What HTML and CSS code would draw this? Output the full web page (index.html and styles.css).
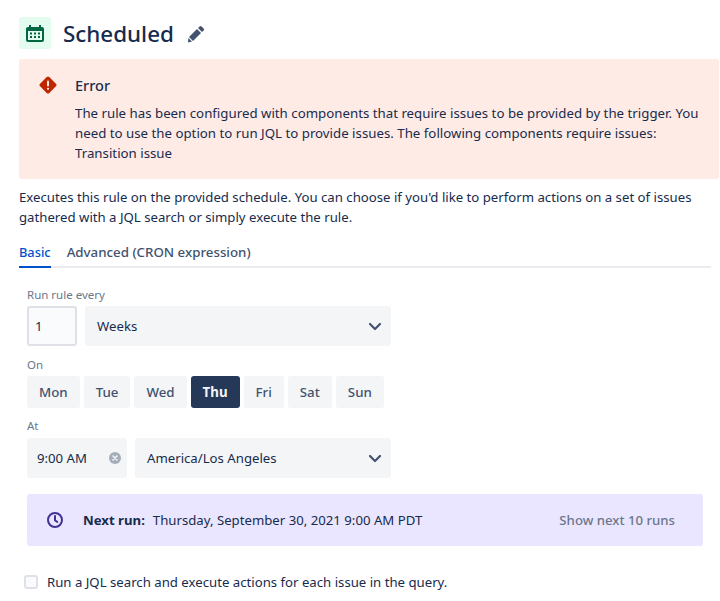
FILE: index.html
```html
<!DOCTYPE html>
<html lang="en">
<head>
  <meta charset="UTF-8" />
  <title>Scheduled</title>
  <link rel="stylesheet" href="styles.css">
</head>
<body>
  <div class="title-row">
    <span class="trigger-icon">
      <svg width="20" height="20" viewBox="0 0 20 20">
        <path fill="#006644" d="M4 2h2v2h8V2h2v2h1a2 2 0 0 1 2 2v11a2 2 0 0 1-2 2H3a2 2 0 0 1-2-2V6a2 2 0 0 1 2-2h1zM3 8v9h14V8z"/>
        <path fill="#006644" d="M5 9.5h2v2H5zM9 9.5h2v2H9zM13 9.5h2v2h-2zM5 13h2v2H5zM9 13h2v2H9zM13 13h2v2h-2z"/>
      </svg>
    </span>
    <h1>Scheduled</h1>
    <svg class="edit-icon" width="18" height="18" viewBox="0 0 18 18">
      <path fill="#42526e" d="M12.6 1.4a1.4 1.4 0 0 1 2 0l2 2a1.4 1.4 0 0 1 0 2L15 7l-4-4zM10 4l4 4-8 8-4-4zM1.400 13l3.600 3.600-4 1z"/>
    </svg>
  </div>

  <div class="error-box">
    <svg class="error-icon" width="18" height="18" viewBox="0 0 18 18">
      <path fill="#bf2600" d="M7.700 1.100a1.800 1.800 0 0 1 2.600 0l6.600 6.600a1.800 1.800 0 0 1 0 2.600l-6.600 6.600a1.800 1.800 0 0 1-2.600 0L1.100 10.300a1.800 1.800 0 0 1 0-2.600z"/>
      <rect x="8" y="4.500" width="2" height="6" rx="1" fill="#ffebe6"/>
      <circle cx="9" cy="12.800" r="1.100" fill="#ffebe6"/>
    </svg>
    <div>
      <h2>Error</h2>
      <p>The rule has been configured with components that require issues to be provided by the trigger. You need to use the option to run JQL to provide issues. The following components require issues: Transition issue</p>
    </div>
  </div>

  <p class="intro">Executes this rule on the provided schedule. You can choose if you'd like to perform actions on a set of issues gathered with a JQL search or simply execute the rule.</p>

  <div class="tabs">
    <span class="tab active">Basic</span>
    <span class="tab">Advanced (CRON expression)</span>
  </div>

  <div class="form">
    <div class="field-label first">Run rule every</div>
    <div class="row">
      <div class="number-input">1</div>
      <div class="select">
        <span>Weeks</span>
        <svg width="14" height="9" viewBox="0 0 14 9"><path d="M2 2l5 5 5-5" fill="none" stroke="#42526e" stroke-width="2.200" stroke-linecap="round" stroke-linejoin="round"/></svg>
      </div>
    </div>

    <div class="field-label">On</div>
    <div class="days">
      <span class="day">Mon</span>
      <span class="day">Tue</span>
      <span class="day">Wed</span>
      <span class="day selected">Thu</span>
      <span class="day">Fri</span>
      <span class="day">Sat</span>
      <span class="day">Sun</span>
    </div>

    <div class="field-label at">At</div>
    <div class="row">
      <div class="time-input">
        <span>9:00 AM</span>
        <svg width="12" height="12" viewBox="0 0 12 12">
          <circle cx="6" cy="6" r="6" fill="#a5adba"/>
          <path d="M4 4l4 4M8 4l-4 4" stroke="#f4f5f7" stroke-width="1.600" stroke-linecap="round"/>
        </svg>
      </div>
      <div class="select">
        <span>America/Los Angeles</span>
        <svg width="14" height="9" viewBox="0 0 14 9"><path d="M2 2l5 5 5-5" fill="none" stroke="#42526e" stroke-width="2.200" stroke-linecap="round" stroke-linejoin="round"/></svg>
      </div>
    </div>

    <div class="next-run">
      <svg width="16" height="16" viewBox="0 0 16 16">
        <circle cx="8" cy="8" r="7" fill="none" stroke="#403294" stroke-width="2"/>
        <path d="M8 4v4.300l2.300 1.700" fill="none" stroke="#403294" stroke-width="2" stroke-linecap="round"/>
      </svg>
      <strong>Next run:</strong>
      <span class="next-date">Thursday, September 30, 2021 9:00 AM PDT</span>
      <span class="show-next">Show next 10 runs</span>
    </div>
  </div>

  <label class="check-row">
    <span class="checkbox"></span>
    <span>Run a JQL search and execute actions for each issue in the query.</span>
  </label>
</body>
</html>
```

FILE: styles.css
```css
body {
  margin: 0;
  padding: 17px 0 0 19px;
  background-color: #fff;
  color: #172b4d;
  font-family: 'Noto Sans', sans-serif;
  font-size: 13.200px;
  line-height: 20px;
  overflow: hidden;
}

.title-row {
  display: flex;
  align-items: center;
  height: 32px;
  margin-bottom: 10px;
}
.trigger-icon {
  width: 32px;
  height: 32px;
  border-radius: 3px;
  background-color: #e3fcef;
  display: flex;
  align-items: center;
  justify-content: center;
}
h1 {
  margin: 2px 12px 0;
  font-size: 22.400px;
  font-weight: 500;
  line-height: 32px;
  color: #172b4d;
}
.edit-icon {
  margin: 1px 0 0 1px;
}

.error-box {
  display: flex;
  gap: 18px;
  width: 700px;
  height: 120px;
  box-sizing: border-box;
  padding: 16px 0 0 20px;
  background-color: #ffebe6;
  border-radius: 3px;
}
.error-icon {
  flex: none;
  margin-top: 1px;
}
.error-box h2 {
  margin: 0 0 8px;
  font-size: 14.500px;
  font-weight: 500;
  line-height: 20px;
}
.error-box p {
  margin: 0;
  width: 630px;
  font-size: 13.280px;
}

.intro {
  margin: 8px 0 0;
  width: 690px;
}

.tabs {
  display: flex;
  gap: 16px;
  margin-top: 15px;
  border-bottom: 2px solid #ebecf0;
  width: 692px;
  height: 24px;
}
.tab {
  font-size: 13.300px;
  font-weight: 500;
  color: #42526e;
  height: 24px;
}
.tab.active {
  font-size: 12.800px;
  color: #0052cc;
  border-bottom: 2px solid #0052cc;
}

.form {
  padding-left: 8px;
}
.field-label {
  font-size: 11.500px;
  color: #6b778c;
  line-height: 16px;
  height: 16px;
  margin: 11px 0 3px;
}
.field-label.first {
  margin-top: 19px;
}
.field-label.at {
  margin: 10px 0 4px;
}

.row {
  display: flex;
  gap: 8px;
  width: 364px;
}
.number-input {
  width: 50px;
  height: 40px;
  box-sizing: border-box;
  padding-left: 6px;
  border: 2px solid #dfe1e6;
  border-radius: 3px;
  background-color: #fafbfc;
  line-height: 36px;
}
.select {
  flex: 1;
  height: 40px;
  box-sizing: border-box;
  padding: 0 9px 0 12px;
  background-color: #f4f5f7;
  border-radius: 3px;
  display: flex;
  align-items: center;
  justify-content: space-between;
}
.time-input {
  width: 100px;
  flex: none;
  height: 40px;
  box-sizing: border-box;
  padding: 0 6px 0 10px;
  background-color: #f4f5f7;
  border-radius: 3px;
  display: flex;
  align-items: center;
  justify-content: space-between;
}

.days {
  display: flex;
  gap: 4px;
}
.day {
  height: 32px;
  padding: 0 12px;
  background-color: #f4f5f7;
  border-radius: 3px;
  font-size: 13.300px;
  font-weight: 500;
  line-height: 32px;
  color: #42526e;
}
.day.selected {
  background-color: #253858;
  color: #f4f5f7;
  font-weight: 700;
}

.next-run {
  display: flex;
  align-items: center;
  width: 676px;
  height: 52px;
  box-sizing: border-box;
  margin-top: 16px;
  padding: 0 28px 0 20px;
  background-color: #eae6ff;
  border-radius: 3px;
}
.next-run strong {
  margin-left: 20px;
  font-weight: 700;
}
.next-date {
  margin-left: 8px;
}
.show-next {
  margin-left: auto;
  font-weight: 500;
  color: #6b778c;
}

.check-row {
  display: flex;
  align-items: center;
  gap: 9px;
  margin: 26px 0 0 5px;
}
.checkbox {
  width: 14px;
  height: 14px;
  box-sizing: border-box;
  border: 2px solid #dfe1e6;
  border-radius: 3px;
  background-color: #fafbfc;
}
```
